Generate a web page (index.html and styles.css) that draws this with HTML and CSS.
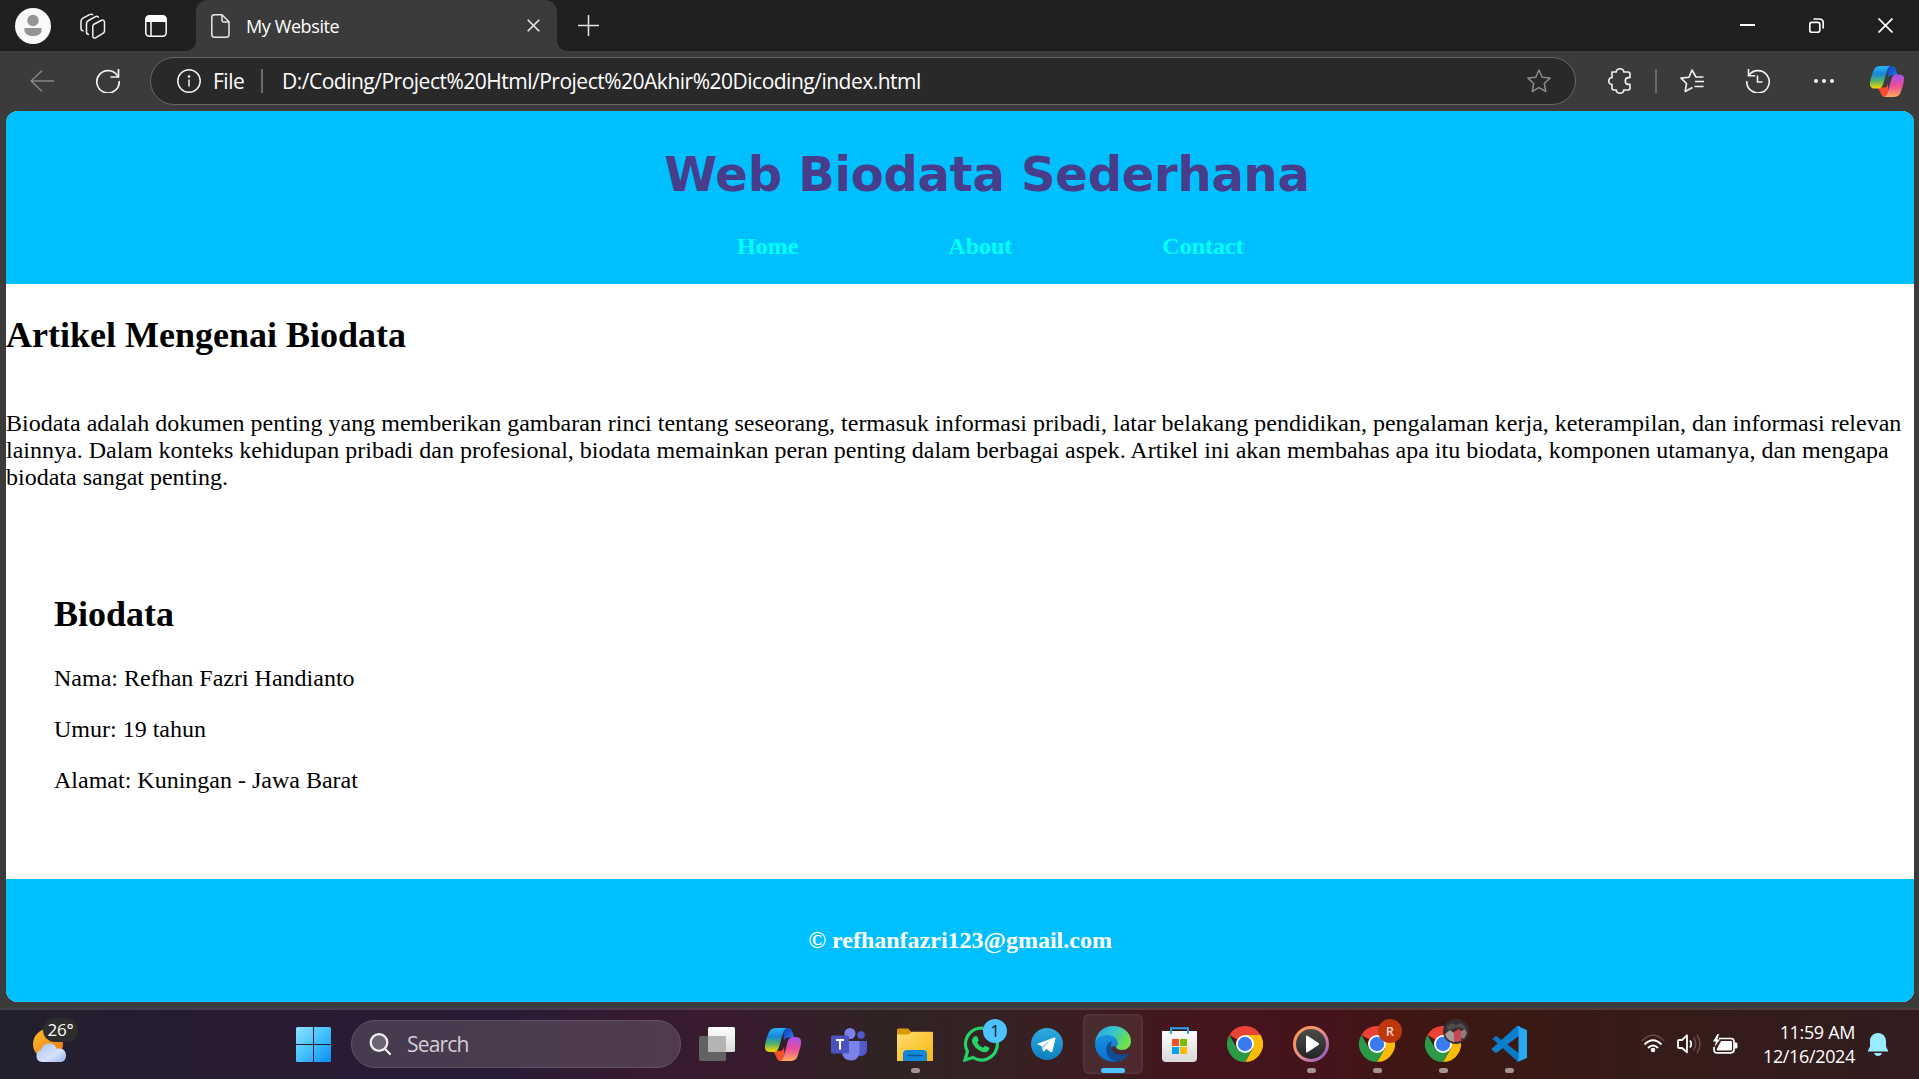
FILE: index.html
```html
<!DOCTYPE html>
<html lang="id">
<head>
<meta charset="utf-8">
<title>My Website</title>
<link rel="stylesheet" href="styles.css">
</head>
<body>
<svg width="0" height="0" class="defs" aria-hidden="true">
  <defs>
    <linearGradient id="cpA" x1="0" y1="0" x2="0" y2="1"><stop offset="0" stop-color="#26b4f2"/><stop offset=".35" stop-color="#1787dc"/><stop offset=".65" stop-color="#4fb26a"/><stop offset="1" stop-color="#ffd400"/></linearGradient>
    <linearGradient id="cpB" x1="0" y1="0" x2="0" y2="1"><stop offset="0" stop-color="#a352ee"/><stop offset=".5" stop-color="#ec4d98"/><stop offset="1" stop-color="#ffa95c"/></linearGradient>
    <linearGradient id="cpC" x1="0" y1="0" x2="1" y2="1"><stop offset="0" stop-color="#1238b8"/><stop offset="1" stop-color="#2485ee"/></linearGradient>
    <linearGradient id="win" x1="0" y1="0" x2="1" y2="1"><stop offset="0" stop-color="#8fe3ff"/><stop offset=".5" stop-color="#43c1fc"/><stop offset="1" stop-color="#0a8cf4"/></linearGradient>
    <linearGradient id="sun" x1="0" y1="0" x2="1" y2="1"><stop offset="0" stop-color="#fbbf2b"/><stop offset="1" stop-color="#f06d13"/></linearGradient>
    <linearGradient id="cloud" x1="0" y1="0" x2="1" y2="1"><stop offset="0" stop-color="#a9c3f4"/><stop offset=".6" stop-color="#d5e2fa"/><stop offset="1" stop-color="#93b4ee"/></linearGradient>
    <linearGradient id="folder" x1="0" y1="0" x2="1" y2="1"><stop offset="0" stop-color="#ffdd72"/><stop offset="1" stop-color="#f9b60c"/></linearGradient>
    <linearGradient id="tele" x1="0" y1="0" x2="0" y2="1"><stop offset="0" stop-color="#2faae0"/><stop offset="1" stop-color="#0c7fbf"/></linearGradient>
    <linearGradient id="edgeTop" x1="0" y1="0" x2="1" y2=".4"><stop offset="0" stop-color="#2b9fe6"/><stop offset=".5" stop-color="#31c4d2"/><stop offset="1" stop-color="#70e04b"/></linearGradient>
    <linearGradient id="edgeLow" x1="0" y1="0" x2="0" y2="1"><stop offset="0" stop-color="#1892dd"/><stop offset="1" stop-color="#0870d0"/></linearGradient>
    <linearGradient id="bag" x1="0" y1="0" x2="0" y2="1"><stop offset="0" stop-color="#fff"/><stop offset="1" stop-color="#d8d8d8"/></linearGradient>
    <linearGradient id="ring" x1="0" y1="0" x2="1" y2="1"><stop offset="0" stop-color="#ff9c3c"/><stop offset=".5" stop-color="#e98f8d"/><stop offset="1" stop-color="#8755d0"/></linearGradient>
    <linearGradient id="disc" x1="0" y1="0" x2="0" y2="1"><stop offset="0" stop-color="#4d4d4d"/><stop offset="1" stop-color="#232323"/></linearGradient>
    <linearGradient id="pane" x1="0" y1="0" x2="0" y2="1"><stop offset="0" stop-color="#fff"/><stop offset="1" stop-color="#dadada"/></linearGradient>
    <symbol id="copilot" viewBox="0 0 36 33">
      <path d="M18 0h4.500c3 0 4.500 2 5.300 4.500L29 9.500h-5c-3 0-4 1-5 3z" fill="url(#cpC)"/>
      <path d="M8 23h7c2 0 3-1 4-4l1 14h-4c-3 0-4-1.500-5-5z" fill="#f4502f"/>
      <path d="M11 0h12c-3 0-4 2-5 5l-4 14c-1 3.500-2.500 5-6 5H5c-3.500 0-6-2-5-7 1-5 2-8 3.500-12C5 1.500 7.500 0 11 0z" fill="url(#cpA)"/>
      <path d="M25 33H14c3 0 4-2 5-5l3.500-13.500C23.500 11 25 9 28.500 9H31c3.500 0 6 2 5 7-1 5-2 8-3.500 12.500C31 32 28.500 33 25 33z" fill="url(#cpB)"/>
    </symbol>
    <symbol id="chrome" viewBox="0 0 36 36">
      <path d="M18 18L2.400 9A18 18 0 0 1 33.600 9z" fill="#ea4335"/>
      <path d="M18 9h15.600A18 18 0 0 1 18 36l7.800-13.500z" fill="#fbbc05"/>
      <path d="M25.800 22.500L18 36A18 18 0 0 1 2.400 9l7.800 13.500c3 5 12 5 15.600 0z" fill="#2a9a48"/>
      <circle cx="18" cy="18" r="9" fill="#fff"/><circle cx="18" cy="18" r="7.200" fill="#3a7cf0"/>
    </symbol>
  </defs>
</svg>

<div class="browser">
  <div class="tabbar">
    <div class="tab-tools">
      <svg class="avatar" width="36" height="36" viewBox="0 0 36 36"><circle cx="18" cy="18" r="18" fill="#f9f9f9"/><circle cx="18" cy="12.500" r="5.700" fill="#949494"/><path d="M9.500 20h17v2.500c0 3.500-4 5.500-8.500 5.500s-8.500-2-8.500-5.500z" fill="#949494"/></svg>
      <svg class="workspaces" width="26" height="26" viewBox="0 0 26 26" fill="none" stroke="#f2f2f2" stroke-width="1.500" stroke-linejoin="round"><path d="M13.500 11.500l7.500-4c2-1 3.500 0 3.500 2v8.500c0 1.300-.7 2-2 2.700l-6.500 4c-1.800 1-3.200 0-3.200-2v-9q0-1.500.7-2.200z"/><path d="M9 21.500c-1.800 0-2.500-1-2.500-2.500v-8.500c0-1.300.7-2.200 2-3l6.500-3.700c1.500-.8 3-.5 3.700.8"/><path d="M3.500 18C1.800 17.700 1 16.700 1 15.500V8.100c0-1.300.7-2.200 2-3l6.500-3.500c1.500-.8 3-.5 3.500.6"/></svg>
      <svg width="22" height="22" viewBox="0 0 22 22"><rect x=".8" y=".8" width="20.400" height="20.400" rx="3.500" fill="none" stroke="#fff" stroke-width="1.500"/><path d="M1 7V4a3 3 0 0 1 3-3h14a3 3 0 0 1 3 3v3z" fill="#fff"/><path d="M6 6v15" stroke="#fff" stroke-width="1.500"/></svg>
    </div>
    <div class="tab">
      <svg width="19" height="24" viewBox="0 0 19 24" fill="none" stroke="#e8e8e8" stroke-width="1.500" stroke-linejoin="round"><path d="M3.500.8H11l7 7v12.700c0 1.700-1 2.700-2.700 2.700H3.500C1.800 23.200.8 22.200.8 20.500v-17C.8 1.800 1.800.8 3.500.8z"/><path d="M11 1v5c0 1.300.7 2 2 2h5"/></svg>
      <span class="tab-title">My Website</span>
      <svg width="13" height="13" viewBox="0 0 13 13" stroke="#f0f0f0" stroke-width="1.500"><path d="M.7.7l11.600 11.600M12.300.7L.7 12.300"/></svg>
    </div>
    <svg class="new-tab" width="21" height="21" viewBox="0 0 21 21" stroke="#e6e6e6" stroke-width="1.500"><path d="M10.500 0v21M0 10.500h21"/></svg>
    <div class="window-buttons">
      <svg width="15" height="15" viewBox="0 0 15 15"><path d="M0 7h15" stroke="#fff" stroke-width="2"/></svg>
      <svg width="15" height="15" viewBox="0 0 15 15" fill="none" stroke="#fff" stroke-width="1.700"><rect x=".8" y="4.300" width="10" height="10" rx="2"/><path d="M4.500 1h5.700c2.500 0 4 1.500 4 4v5.500"/></svg>
      <svg width="15" height="15" viewBox="0 0 15 15" stroke="#fff" stroke-width="1.700"><path d="M.5.5l14 14M14.500.5l-14 14"/></svg>
    </div>
  </div>

  <div class="toolbar">
    <div class="nav-buttons">
      <svg width="24" height="22" viewBox="0 0 24 22" fill="none" stroke="#878787" stroke-width="1.500"><path d="M24 11H1M12 .7L1 11l11 10.300"/></svg>
      <svg width="24" height="24" viewBox="0 0 24 24" fill="none" stroke="#f2f2f2" stroke-width="1.700"><path d="M22.300 8.300A11.200 11.200 0 1 0 23.200 12"/><path d="M22.500 0v8h-8"/></svg>
    </div>
    <div class="address">
      <svg width="24" height="24" viewBox="0 0 24 24" fill="none" stroke="#f2f2f2" stroke-width="1.500"><circle cx="12" cy="12" r="11.200"/><path d="M12 10.500v7"/><circle cx="12" cy="7.500" r=".6" fill="#fff"/></svg>
      <span class="scheme">File</span>
      <span class="bar"></span>
      <span class="url">D:/Coding/Project%20Html/Project%20Akhir%20Dicoding/index.html</span>
      <svg width="24" height="24" viewBox="0 0 24 24" fill="none" stroke="#8b8b8b" stroke-width="1.500" stroke-linejoin="round"><path d="M12 1l3.200 7.200 7.800.9-5.700 5.400 1.500 8L12 18.700 5.200 22.500l1.500-8L1 9.100l7.800-.9z"/></svg>
    </div>
    <div class="actions">
      <svg class="puzzle" width="24" height="26" viewBox="0 0 24 26" fill="none" stroke="#f2f2f2" stroke-width="1.600" stroke-linejoin="round"><path d="M4 4h4.300C8 1.900 10 .8 12 .8s4 1.100 3.700 3.200H20c1.300 0 2 .7 2 2v3.600h-1.700c-4 0-4 6.800 0 6.800H22V20c0 1.300-.7 2-2 2h-4.300c.3 2.100-1.700 3.200-3.700 3.200s-4-1.100-3.700-3.200H6c-1.300 0-2-.7-2-2v-3.600C2 16.700.8 15 .8 13S2 9.300 4 9.600z"/></svg>
      <span class="bar"></span>
      <svg width="24" height="24" viewBox="0 0 24 24" fill="none" stroke="#f2f2f2" stroke-width="1.600" stroke-linejoin="round"><path d="M23.500 8h-7.500L12 1 9 8.200 1 9.100l5.500 5.400-1.300 8L12.500 18.500M15 12.500h9M14.500 17.500h9"/></svg>
      <svg width="24" height="24" viewBox="0 0 24 24" fill="none" stroke="#f2f2f2" stroke-width="1.600"><path d="M2.700 6.500A11.200 11.200 0 1 1 .8 12M2.500 0v6.700h6.700M11.500 6.500V13h5"/></svg>
      <svg width="21" height="4" viewBox="0 0 21 4" fill="#f2f2f2"><circle cx="2" cy="2" r="2"/><circle cx="10" cy="2" r="2"/><circle cx="18" cy="2" r="2"/></svg>
      <svg class="side" width="34" height="31" viewBox="0 0 36 33"><use href="#copilot"/></svg>
    </div>
  </div>

  <div class="page">
    <header class="site-header">
      <h1>Web Biodata Sederhana</h1>
      <nav><a>Home</a><a>About</a><a>Contact</a></nav>
    </header>
    <main>
      <article>
        <h2>Artikel Mengenai Biodata</h2>
        <p>Biodata adalah dokumen penting yang memberikan gambaran rinci tentang seseorang, termasuk informasi pribadi, latar belakang pendidikan, pengalaman kerja, keterampilan, dan informasi relevan lainnya. Dalam konteks kehidupan pribadi dan profesional, biodata memainkan peran penting dalam berbagai aspek. Artikel ini akan membahas apa itu biodata, komponen utamanya, dan mengapa biodata sangat penting.</p>
      </article>
      <section>
        <h2>Biodata</h2>
        <p>Nama: Refhan Fazri Handianto</p>
        <p>Umur: 19 tahun</p>
        <p>Alamat: Kuningan - Jawa Barat</p>
      </section>
    </main>
    <footer>© refhanfazri123@gmail.com</footer>
  </div>
</div>

<div class="taskbar">
  <div class="weather">
    <svg width="34" height="34" viewBox="0 0 34 34"><circle cx="15" cy="15" r="15" fill="url(#sun)"/><path d="M9 33a6 6 0 0 1-1-11.800C9 16.500 13 14 17 14.500c3.500.4 6 2.500 7 5.500 5-1.500 9 1.500 9 6.500s-3 6.500-6 6.500z" fill="url(#cloud)"/></svg>
    <span class="degrees">26°</span>
  </div>
  <svg class="start" width="35" height="35" viewBox="0 0 35 35" fill="url(#win)"><path d="M1.500 0H17v17H0V1.500Q0 0 1.500 0zM18 0h15.500Q35 0 35 1.500V17H18zM0 18h17v17H1.500Q0 35 0 33.500zM18 18h17v15.500q0 1.500-1.500 1.500H18z"/></svg>
  <div class="search">
    <svg width="23" height="23" viewBox="0 0 23 23" fill="none" stroke="#eee" stroke-width="2.300" stroke-linecap="round"><circle cx="10" cy="9.500" r="8.300" fill="#6b6573"/><path d="M16 16l5 5"/></svg>
    <span>Search</span>
  </div>
  <div class="apps">
    <div class="app"><svg width="36" height="34" viewBox="0 0 36 34"><rect x="9" y="0" width="27" height="25" rx="1.500" fill="url(#pane)"/><rect x="0" y="9" width="27" height="25" rx="1.500" fill="#626262"/><path d="M9 9h18v16H9z" fill="#b4b4b4"/></svg></div>
    <div class="app"><svg width="36" height="33"><use href="#copilot"/></svg></div>
    <div class="app"><svg width="36" height="33" viewBox="0 0 36 33"><circle cx="19" cy="5.500" r="5.500" fill="#7b83eb"/><circle cx="30" cy="7" r="3.800" fill="#5059c9"/><path d="M25 13h11v8c0 5-3 7-6 7s-5-2-5-5z" fill="#5059c9"/><path d="M11 13h17.500v11c0 5-4 8.500-8.500 8.500S11 29 11 24z" fill="#7b83eb"/><rect y="7.500" width="18" height="18" rx="1.500" fill="#4b53bc"/><path d="M5 12h8M9 12v9.500" stroke="#fff" stroke-width="2"/></svg></div>
    <div class="app open"><svg width="36" height="33" viewBox="0 0 36 33"><path d="M0 2Q0 .5 1.500.5H11l4 4V10H0z" fill="#dd9a00"/><path d="M0 6.500h11.500L15 3.700h19.500Q36 3.700 36 5v28H0z" fill="url(#folder)"/><path d="M6 33v-7q0-4 4-4h16q4 0 4 4v7z" fill="#1187d6"/><path d="M11 27.500h14" stroke="#0b559a" stroke-width="1.500" stroke-linecap="round"/></svg></div>
    <div class="app"><svg width="36" height="36" viewBox="0 0 36 36"><path d="M2 34l2.400-8.500A15.900 15.900 0 1 1 10 31.500z" fill="none" stroke="#25d366" stroke-width="3.200"/><path d="M12.500 10c.8-.3 1.500 0 1.800.8l1.300 3.200c.2.600-.7 1.900-1.300 2.500 1.300 2.500 3.200 4.200 5.800 5.300.7-.6 1.700-2.200 2.500-1.900l3.300 1.600c.7.400.6.800.4 1.600-.6 2.200-3 3.400-5 3.100-6-1-11.500-6.300-12.300-11-.3-2 1.600-4.700 3.500-5.200z" fill="#25d366"/></svg><span class="badge count">1</span></div>
    <div class="app"><svg width="32" height="32" viewBox="0 0 32 32"><circle cx="16" cy="16" r="16" fill="url(#tele)"/><path d="M6 16L23 9.500c1-.4 1.700.2 1.400 1.400L21.500 23c-.3 1.300-1 1.500-2 1l-4-3-2.500 2.300c-.6.500-1 .2-1.200-.6L10.500 18z" fill="#fff"/><path d="M11 18l9-6-7 7-.5 4z" fill="#a9cfe6"/></svg></div>
    <div class="app active"><svg width="36" height="36" viewBox="0 0 36 36"><path d="M0 17C1 7 8 0 18 0c11 0 18 7.500 18 15 0 6-4.500 9-9 9-4 0-6-1.500-6-3 0-1 1.500-1.500 1.500-4 0-4-4-7-9-7C7 10 2 13 0 17z" fill="url(#edgeTop)"/><path d="M0 18C1 12 6 9 12 9s10.500 4 10.500 8c0 2.500-1.500 3-1.500 4-3-2-7 1-7 5 0 5 4 9 9 9.300C12 38 0 30 0 18z" fill="url(#edgeLow)"/><path d="M17 15c-6 2-7 9-4.500 14 2.500 5 6.500 6.500 10 6.500 5 0 9-4 10.500-6.500.7-1.300 0-1.700-1-1.300-8 3.200-16-1.200-16-7.700 0-2 .5-4 1-5z" fill="#114b93"/></svg></div>
    <div class="app"><svg width="35" height="35" viewBox="0 0 35 35"><path d="M0 4h35v27q0 4-4 4H4q-4 0-4-4z" fill="url(#bag)"/><path d="M9 7V1.200h17V7" fill="none" stroke="#27a8f4" stroke-width="2"/><path d="M10 12h7v7h-7z" fill="#f25022"/><path d="M18 12h7v7h-7z" fill="#7fba00"/><path d="M10 20h7v7h-7z" fill="#00a4ef"/><path d="M18 20h7v7h-7z" fill="#ffb900"/></svg></div>
    <div class="app"><svg width="36" height="36"><use href="#chrome"/></svg></div>
    <div class="app open"><svg width="36" height="36" viewBox="0 0 36 36"><circle cx="18" cy="18" r="16.500" fill="url(#disc)" stroke="url(#ring)" stroke-width="3"/><path d="M13 10.500q0-1.500 1.500-.8l11 7.200q1.200 1.100 0 2.200l-11 7.200q-1.500.7-1.500-.8z" fill="#fff"/></svg></div>
    <div class="app open"><svg width="36" height="36"><use href="#chrome"/></svg><span class="badge letter">R</span></div>
    <div class="app open"><svg width="36" height="36"><use href="#chrome"/></svg>
      <svg class="badge photo" width="26" height="25" viewBox="0 0 26 25"><ellipse cx="13" cy="12.500" rx="13" ry="12.500" fill="#35302f"/><path d="M4 7l5-3 4 2 6-2 4 5-3 1-5-2-6 2-5 1z" fill="#524d4c"/><path d="M2 15l5-4 4 3v9c-5-1-8-4-9-8z" fill="#a7989a"/><path d="M11 13l5-3 4 4-2 8-7 1z" fill="#c74757"/><path d="M18 12l4-2 2 4-3 6-3-2z" fill="#927a79"/></svg></div>
    <div class="app open"><svg width="36" height="36" viewBox="0 0 36 36"><path d="M1 13.500l3-3q1-.8 2 0L29 28v7.500L26 35 1 12.500z" fill="#0878c2"/><path d="M1 24l3 2.500q1 .7 2 0L29 9V0h-3L1 22.500q-1 .7 0 1.500z" fill="#0b80cc"/><path d="M26 0l9 3.500q1 .5 1 1.500v26q0 1-1 1.500L26 36q1.500-1 1.500-3V3q0-2-1.500-3z" fill="#29a6f4"/></svg></div>
  </div>
  <div class="tray">
    <svg width="24" height="20" viewBox="0 0 24 20" fill="none" stroke="#fff" stroke-width="2"><path d="M.7 7Q12-4.500 23.300 7" stroke="#684a47" stroke-width="1.500"/><path d="M3.500 10.500Q12 2 20.500 10.500M7 14Q12 9 17 14"/><circle cx="12" cy="16" r="1.300" fill="#fff"/></svg>
    <svg width="24" height="20" viewBox="0 0 24 20" fill="none" stroke="#fff" stroke-width="1.800" stroke-linejoin="round"><path d="M1 7q0-1 1-1h3l5-4.700v17L5 14H2q-1 0-1-1z"/><path d="M13 6.500q2.500 3.500 0 7"/><path d="M16.500 3.500q4.500 6.500 0 13M20 1q6 9 0 18" stroke="#6b4c49" stroke-width="1.500"/></svg>
    <svg width="25" height="21" viewBox="0 0 25 21"><path d="M6 4.500h12q3 0 3 3v8.300q0 3-3 3H4q-3 0-3-3V13" fill="none" stroke="#fff" stroke-width="1.700"/><path d="M8 7h10q1 0 1 1v7.500q0 1-1 1H5q-1.500 0-1.500-1z" fill="#fff"/><path d="M21.500 8.500H23q1.500 0 1.500 1.500v3q0 1.500-1.500 1.500h-1.500z" fill="#fff"/><path d="M4.500 0L0 7.500h3L1.500 13 7 5.500H4.300L6 0z" fill="#fff"/></svg>
    <div class="clock"><span>11:59 AM</span><span>12/16/2024</span></div>
    <svg class="bell" width="20" height="23" viewBox="0 0 20 23" fill="#99ebff"><path d="M10 0c5 0 8 4 8 8v5.500l2 4V18.500H0V17.500l2-4V8c0-4 3-8 8-8zM6 20h8q-1 3-4 3t-4-3z"/></svg>
  </div>
</div>
</body>
</html>
```
FILE: styles.css
```css
* { box-sizing: border-box; }
body {
  margin: 0;
  width: 1919px;
  height: 1079px;
  overflow: hidden;
  display: flex;
  flex-direction: column;
  background: #3b3b3b;
  color: #fff;
  font-family: "Open Sans", "Noto Sans", sans-serif;
}
svg { display: block; flex: none; }
.defs { position: absolute; }

.browser { height: 1008px; display: flex; flex-direction: column; }

/* tab strip */
.tabbar { height: 51px; flex: none; display: flex; background: #202020; }
.tab-tools { width: 196px; display: flex; align-items: center; padding-left: 15px; }
.tab-tools .workspaces { margin: 0 39px 0 29px; }
.tab-tools svg { margin-top: 1px; }
.tab {
  position: relative;
  width: 361px;
  display: flex;
  align-items: center;
  padding: 0 17px 0 15px;
  border-radius: 12px 12px 0 0;
  background: #3b3b3b;
}
.tab::before, .tab::after {
  content: "";
  position: absolute;
  bottom: 0;
  width: 10px;
  height: 10px;
}
.tab::before { left: -10px; background: radial-gradient(circle at 0 0, #202020 9.500px, #3b3b3b 10px); }
.tab::after { right: -10px; background: radial-gradient(circle at 100% 0, #202020 9.500px, #3b3b3b 10px); }
.tab-title { flex: 1; margin-left: 16px; font-size: 18px; letter-spacing: -0.4px; line-height: 24px; }
.new-tab { margin: 15px 0 0 21px; }
.window-buttons { margin: 18px 26px 0 auto; display: flex; gap: 54px; }

/* toolbar */
.toolbar { height: 60px; flex: none; display: flex; align-items: center; }
.nav-buttons { width: 150px; display: flex; align-items: center; gap: 42px; padding-left: 30px; }
.address {
  width: 1426px;
  height: 48px;
  display: flex;
  align-items: center;
  padding: 0 24px 0 26px;
  border: 1.500px solid #666;
  border-radius: 24px;
  background: #292929;
  font-size: 21px;
}
.scheme { width: 48px; padding-left: 12px; letter-spacing: -0.5px; }
.bar { width: 2px; height: 24px; background: #6a6a6a; }
.address .bar { margin-left: 12px; }
.url { flex: 1; margin-left: 19px; letter-spacing: -0.5px; }
.actions { flex: 1; display: flex; align-items: center; padding-left: 32px; }
.actions .puzzle { margin-right: 23px; }
.actions .bar + svg { margin: 0 42px 0 23px; }
.actions svg:nth-of-type(4) { margin-left: 44px; }
.actions .side { margin-left: 35px; }

/* document */
.page {
  width: 1908px;
  height: 891px;
  margin-left: 6px;
  display: flex;
  flex-direction: column;
  overflow: hidden;
  border-radius: 12px;
  background: #fff;
  color: #000;
  font: 24px/27px "Liberation Serif", "Times New Roman", serif;
}
.site-header { height: 173px; flex: none; padding-top: 34px; background: #00bfff; text-align: center; }
.site-header h1 {
  margin: 0 0 0 54px;
  font: bold 48px/58px "DejaVu Sans", Verdana, sans-serif;
  letter-spacing: -0.25px;
  color: #483d8b;
}
.site-header nav {
  display: flex;
  gap: 150px;
  margin: 30px 0 0 731px;
  font-weight: bold;
  color: #00ffff;
}
main { flex: 1; padding-top: 31px; }
h2, main p { margin: 0; }
h2 { font-size: 36px; line-height: 41px; }
article p { margin-top: 54px; }
section { padding: 103px 0 0 48px; }
section p { margin-top: 24px; }
section h2 { margin-bottom: 30px; }
footer { height: 123px; flex: none; padding-top: 48px; background: #00bfff; color: #fff; text-align: center; font-weight: bold; }

/* taskbar */
.taskbar {
  height: 71px;
  display: flex;
  align-items: center;
  padding-bottom: 1px;
  border-top: 2px solid rgba(255, 255, 255, .14);
  background: linear-gradient(90deg, #231f2f 0, #261c2f 180px, #2a1b34 380px, #281b34 500px, #361a31 640px, #371b2e 740px, #302324 880px, #352123 1000px, #46141c 1220px, #44141a 1340px, #3e1712 1430px, #351c18 1640px, #311d1f 1919px) border-box;
}
.weather { position: relative; width: 296px; padding-left: 33px; height: 40px; padding-top: 5px; }
.degrees {
  position: absolute;
  left: 43px;
  top: -6px;
  width: 35px;
  height: 24px;
  border-radius: 12px;
  background: #2d2d2d;
  font-size: 17px;
  letter-spacing: -0.3px;
  line-height: 23px;
  text-align: center;
}
.search {
  width: 330px;
  height: 48px;
  margin-left: 20px;
  display: flex;
  align-items: center;
  gap: 15px;
  padding-left: 17px;
  border: 1.500px solid #615665;
  border-radius: 24px;
  background: linear-gradient(90deg, #453b4f, #513a4d);
  color: #d3ced6;
  font-size: 21px;
  letter-spacing: -0.8px;
}
.apps { display: flex; margin-left: 3px; }
.app {
  position: relative;
  width: 60px;
  height: 60px;
  margin: 0 3px;
  display: flex;
  align-items: center;
  justify-content: center;
  border-radius: 6px;
}
.app.active { background: rgba(255, 255, 255, .07); box-shadow: inset 0 0 0 1.500px rgba(255, 255, 255, .06); }
.app.open::after, .app.active::after {
  content: "";
  position: absolute;
  bottom: 1px;
  width: 9px;
  height: 5px;
  border-radius: 3px;
  background: #a69493;
}
.app.active::after { width: 24px; background: #4cc2ff; }
.badge { position: absolute; left: 32px; top: 5px; width: 24px; height: 24px; border-radius: 50%; text-align: center; line-height: 24px; }
.count { background: #4cc2ff; color: #10242f; font-size: 17px; }
.letter { background: #bf360c; color: #f5d5c8; font-size: 13px; font-weight: 600; left: 31px; }
.photo { width: 26px; height: 25px; border-radius: 0; left: 30px; top: 5px; }
.tray { flex: 1; display: flex; align-items: center; padding-left: 99px; gap: 12px; }
.clock { width: 105px; display: flex; flex-direction: column; align-items: flex-end; font-size: 18px; line-height: 24px; letter-spacing: -0.35px; }
.bell { margin-left: 1px; }
```
